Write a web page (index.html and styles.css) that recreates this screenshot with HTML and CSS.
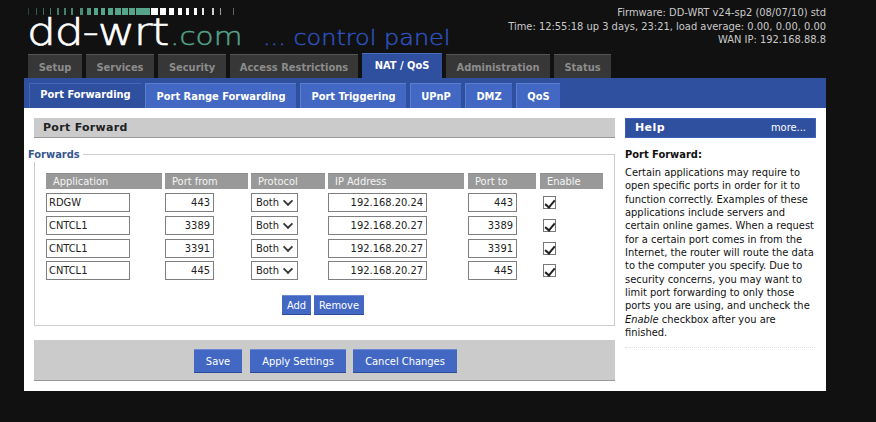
FILE: index.html
```html
<!DOCTYPE html>
<html lang="en">
<head>
<meta charset="utf-8">
<title>DD-WRT Port Forward</title>
<link rel="stylesheet" href="styles.css">
</head>
<body>
<div class="page">
  <header class="header">
    <div class="brand">
      <svg class="ticks" width="210" height="8" viewBox="0 0 210 8" aria-hidden="true">
        <g fill="#55a58a">
          <rect x="0" y="0" width="1" height="7" opacity=".35"/><rect x="8" y="0" width="1" height="7" opacity=".5"/><rect x="15" y="0" width="1" height="7" opacity=".6"/><rect x="22" y="0" width="1" height="7" opacity=".7"/><rect x="29" y="0" width="2" height="7" opacity=".7"/><rect x="36" y="0" width="2" height="7" opacity=".75"/><rect x="43" y="0" width="2" height="7" opacity=".8"/><rect x="52" y="0" width="3" height="7" opacity=".85"/><rect x="59" y="0" width="4" height="7" opacity=".9"/><rect x="66" y="0" width="4" height="7"/><rect x="73" y="0" width="4" height="7"/><rect x="80" y="0" width="5" height="7"/><rect x="87" y="0" width="6" height="7"/><rect x="94" y="0" width="6" height="7"/><rect x="101" y="0" width="6" height="7"/><rect x="108" y="0" width="7" height="7"/><rect x="115" y="0" width="7" height="7"/>
        </g>
        <g fill="#fff">
          <rect x="123" y="0" width="7" height="7"/><rect x="132" y="0" width="6" height="7"/><rect x="141" y="0" width="5" height="7"/><rect x="150" y="0" width="4" height="7"/><rect x="158" y="0" width="3" height="7"/><rect x="166" y="0" width="3" height="7"/><rect x="174" y="0" width="2" height="7" opacity=".9"/><rect x="184" y="0" width="2" height="7" opacity=".8"/><rect x="192" y="0" width="1" height="7" opacity=".6"/><rect x="205" y="0" width="1" height="7" opacity=".35"/>
        </g>
      </svg>
      <div class="logo"><span class="logo-main">dd-wrt</span><span class="logo-com">.com</span><span class="logo-panel">... control panel</span></div>
    </div>
    <div class="info">
      <div>Firmware: DD-WRT v24-sp2 (08/07/10) std</div>
      <div>Time: 12:55:18 up 3 days, 23:21, load average: 0.00, 0.00, 0.00</div>
      <div>WAN IP: 192.168.88.8</div>
    </div>
  </header>
  <nav class="tabs">
    <a class="tab t-setup">Setup</a>
    <a class="tab t-services">Services</a>
    <a class="tab t-security">Security</a>
    <a class="tab t-access">Access Restrictions</a>
    <a class="tab t-nat active">NAT / QoS</a>
    <a class="tab t-admin">Administration</a>
    <a class="tab t-status">Status</a>
  </nav>
  <nav class="subtabs">
    <a class="sub s-pf current">Port Forwarding</a>
    <a class="sub s-range">Port Range Forwarding</a>
    <a class="sub s-trig">Port Triggering</a>
    <a class="sub s-upnp">UPnP</a>
    <a class="sub s-dmz">DMZ</a>
    <a class="sub s-qos">QoS</a>
  </nav>
  <div class="content">
    <main class="main">
      <h2 class="title">Port Forward</h2>
      <section class="fieldset">
        <h3 class="legend">Forwards</h3>
        <div class="grid">
          <div class="th">Application</div><div class="th">Port from</div><div class="th">Protocol</div><div class="th th-short">IP Address</div><div class="th th-short">Port to</div><div class="th">Enable</div>

          <div class="cell"><input class="in in-app" value="RDGW"></div>
          <div class="cell"><input class="in in-port" value="443"></div>
          <div class="cell"><span class="sel-wrap"><select class="sel"><option>Both</option></select></span></div>
          <div class="cell"><input class="in in-ip" value="192.168.20.24"></div>
          <div class="cell"><input class="in in-port" value="443"></div>
          <div class="cell"><input class="chk" type="checkbox" checked></div>

          <div class="cell"><input class="in in-app" value="CNTCL1"></div>
          <div class="cell"><input class="in in-port" value="3389"></div>
          <div class="cell"><span class="sel-wrap"><select class="sel"><option>Both</option></select></span></div>
          <div class="cell"><input class="in in-ip" value="192.168.20.27"></div>
          <div class="cell"><input class="in in-port" value="3389"></div>
          <div class="cell"><input class="chk" type="checkbox" checked></div>

          <div class="cell"><input class="in in-app" value="CNTCL1"></div>
          <div class="cell"><input class="in in-port" value="3391"></div>
          <div class="cell"><span class="sel-wrap"><select class="sel"><option>Both</option></select></span></div>
          <div class="cell"><input class="in in-ip" value="192.168.20.27"></div>
          <div class="cell"><input class="in in-port" value="3391"></div>
          <div class="cell"><input class="chk" type="checkbox" checked></div>

          <div class="cell"><input class="in in-app" value="CNTCL1"></div>
          <div class="cell"><input class="in in-port" value="445"></div>
          <div class="cell"><span class="sel-wrap"><select class="sel"><option>Both</option></select></span></div>
          <div class="cell"><input class="in in-ip" value="192.168.20.27"></div>
          <div class="cell"><input class="in in-port" value="445"></div>
          <div class="cell"><input class="chk" type="checkbox" checked></div>
        </div>
        <div class="row-actions">
          <button class="btn btn-small b-add">Add</button>
          <button class="btn btn-small b-remove">Remove</button>
        </div>
      </section>
      <div class="savebar">
        <button class="btn btn-large b-save">Save</button>
        <button class="btn btn-large b-apply">Apply Settings</button>
        <button class="btn btn-large b-cancel">Cancel Changes</button>
      </div>
    </main>
    <aside class="help">
      <div class="help-head"><span class="help-title">Help</span><span class="help-more">more...</span></div>
      <div class="help-body">
        <h4 class="help-h">Port Forward:</h4>
        <p class="help-p">Certain applications may require to<br>open specific ports in order for it to<br>function correctly. Examples of these<br>applications include servers and<br>certain online games. When a request<br>for a certain port comes in from the<br>Internet, the router will route the data<br>to the computer you specify. Due to<br>security concerns, you may want to<br>limit port forwarding to only those<br>ports you are using, and uncheck the<br><em>Enable</em> checkbox after you are<br>finished.</p>
      </div>
    </aside>
  </div>
</div>
</body>
</html>
```
FILE: styles.css
```css
* { box-sizing: border-box; }
html, body { margin: 0; padding: 0; }
body {
  width: 876px;
  height: 422px;
  overflow: hidden;
  background: #111;
  color: #111;
  font-family: "DejaVu Sans", sans-serif;
  font-stretch: condensed;
  font-size: 11px;
}
.page { width: 802px; margin-left: 24px; }

.header { height: 53px; display: flex; justify-content: space-between; }
.brand { padding: 8px 0 0 3px; }
.ticks { display: block; margin-left: 1px; }
.logo { display: flex; align-items: baseline; height: 38px; line-height: 32px; white-space: nowrap; }
.logo-main, .logo-com, .logo-panel {
  display: inline-block;
  font-weight: 200;
  font-stretch: normal;
  transform-origin: left bottom;
}
.logo-main {
  color: #fff;
  font-size: 38px;
  width: 143px;
  letter-spacing: -1px;
  -webkit-text-stroke: .7px #fff;
  transform: scaleX(1.2);
}
.logo-com {
  color: #55a58a;
  font-size: 24px;
  width: 93px;
  -webkit-text-stroke: .4px #55a58a;
  transform: scaleX(1.23);
}
.logo-panel {
  color: #2f54c0;
  font-size: 21px;
  -webkit-text-stroke: .4px #2f54c0;
  transform: scaleX(1.14);
}
.info { color: #c9c9c9; font-size: 11px; line-height: 13.5px; text-align: right; padding-top: 6px; }

.tabs { height: 25px; display: flex; align-items: flex-end; padding-left: 4px; gap: 4px; }
.tab {
  height: 24px;
  background: #373737;
  border-top: 1px solid #555;
  color: #8c8c8c;
  font-weight: 700;
  font-size: 11px;
  line-height: 25px;
  text-align: center;
  flex: none;
}
.t-setup { width: 54px; }
.t-services { width: 68px; }
.t-security { width: 68px; }
.t-access { width: 128px; }
.t-nat { width: 80px; height: 25px; background: #2f4f9f; border-top-color: #4a6cc0; color: #fff; line-height: 24px; }
.t-admin { width: 104px; }
.t-status { width: 57px; }

.subtabs { height: 30px; background: #2f4f9f; display: flex; align-items: flex-end; padding-left: 5px; gap: 4px; }
.sub {
  height: 25px;
  background: #4368c4;
  border-top: 1px solid #5d7fd0;
  border-left: 1px solid #5d7fd0;
  color: #fff;
  font-weight: 700;
  font-size: 11px;
  line-height: 25px;
  text-align: center;
  flex: none;
}
.s-pf { width: 112px; }
.s-range { width: 151px; }
.s-trig { width: 106px; }
.s-upnp { width: 51px; }
.s-dmz { width: 47px; }
.s-qos { width: 44px; }
.sub.current { background: #2f4f9f; line-height: 22px; border-color: #4566b8; }

.content { height: 283px; background: #fff; display: flex; padding: 10px 10px 0; gap: 10px; }
.main { width: 581px; flex: none; }
.title {
  margin: 0;
  height: 20px;
  background: #cbcbcb;
  border-bottom: 1px solid #999;
  font-size: 11px;
  font-weight: 700;
  font-stretch: normal;
  letter-spacing: .3px;
  line-height: 19px;
  padding-left: 9px;
  color: #222;
}
.fieldset {
  position: relative;
  margin-top: 16px;
  height: 172px;
  border: 1px solid #ccc;
  padding: 18px 11px 0;
}
.legend {
  position: absolute;
  left: -7px;
  top: -7px;
  margin: 0;
  padding: 0 3px 0 0;
  background: #fff;
  color: #36568f;
  font-size: 11px;
  font-weight: 700;
  line-height: 14px;
}
.grid {
  display: grid;
  grid-template-columns: 116px 83px 74px 137px 69px 63px;
  grid-template-rows: 16px 23px 23px 22px 23px;
  column-gap: 3px;
  width: 557px;
}
.th {
  background: #999;
  border-top: 1px solid #8d8d8d;
  color: #f4f4f4;
  font-size: 11px;
  line-height: 15px;
  padding-left: 7px;
}
.th-short { margin-right: 1px; }
.cell { padding-top: 4px; display: flex; align-items: flex-start; }
.in {
  height: 19px;
  border: 1px solid #7f7f7f;
  background: #fff;
  color: #222;
  font: inherit;
  font-size: 11px;
  padding: 0 3px 0 2px;
  border-radius: 0;
  outline: 0;
}
.in-app { width: 84px; }
.in-port { width: 49px; text-align: right; }
.in-ip { width: 99px; text-align: right; }
.sel-wrap { position: relative; display: block; width: 47px; height: 19px; }
.sel-wrap::after {
  content: "";
  position: absolute;
  right: 6px;
  top: 4px;
  width: 6px;
  height: 6px;
  border-right: 2px solid #333;
  border-bottom: 2px solid #333;
  transform: rotate(45deg) scale(.9);
  pointer-events: none;
}
.sel {
  display: block;
  width: 47px;
  height: 19px;
  border: 1px solid #7f7f7f;
  background: #fff;
  color: #222;
  font: inherit;
  font-size: 11px;
  padding: 0 0 0 4px;
  border-radius: 0;
  appearance: none;
  -webkit-appearance: none;
}
.chk {
  position: relative;
  appearance: none;
  -webkit-appearance: none;
  margin: 3px 0 0 3px;
  width: 13px;
  height: 13px;
  border: 1px solid #777;
  background: #fff;
  border-radius: 0;
}
.chk::after {
  content: "";
  position: absolute;
  left: 3px;
  top: 1px;
  width: 4px;
  height: 8px;
  border-right: 2px solid #222;
  border-bottom: 2px solid #222;
  transform: rotate(40deg);
}
.row-actions { display: flex; justify-content: center; gap: 3px; margin-top: 15px; padding-right: 3px; }
.btn {
  background: #4368c4;
  color: #fff;
  font: inherit;
  font-size: 11px;
  border: 0;
  padding: 0;
  border-top: 1px solid #6b88d2;
  border-bottom: 1px solid #2b4a98;
}
.btn-small { height: 20px; }
.b-add { width: 29px; }
.b-remove { width: 50px; }
.savebar {
  margin-top: 14px;
  height: 41px;
  background: #cbcbcb;
  border-bottom: 1px solid #999;
  display: flex;
  gap: 8px;
  padding: 9px 0 0 160px;
}
.btn-large { height: 24px; }
.b-save { width: 48px; }
.b-apply { width: 96px; }
.b-cancel { width: 104px; margin-left: -1px; }

.help { width: 191px; flex: none; }
.help-head {
  height: 20px;
  background: #2f4f9f;
  border: 1px solid #3d60b8;
  color: #fff;
  display: flex;
  justify-content: space-between;
  padding: 0 9px;
  line-height: 18px;
}
.help-title { font-weight: 700; font-size: 11px; font-stretch: normal; letter-spacing: .4px; }
.help-more { font-size: 11px; }
.help-body { padding-top: 10px; height: 210px; border-bottom: 1px dotted #ddd; width: 190px; }
.help-h { margin: 0; font-size: 11px; font-weight: 700; line-height: 14px; }
.help-p { margin: 4px 0 0; font-size: 11px; line-height: 13.35px; white-space: nowrap; }
```
